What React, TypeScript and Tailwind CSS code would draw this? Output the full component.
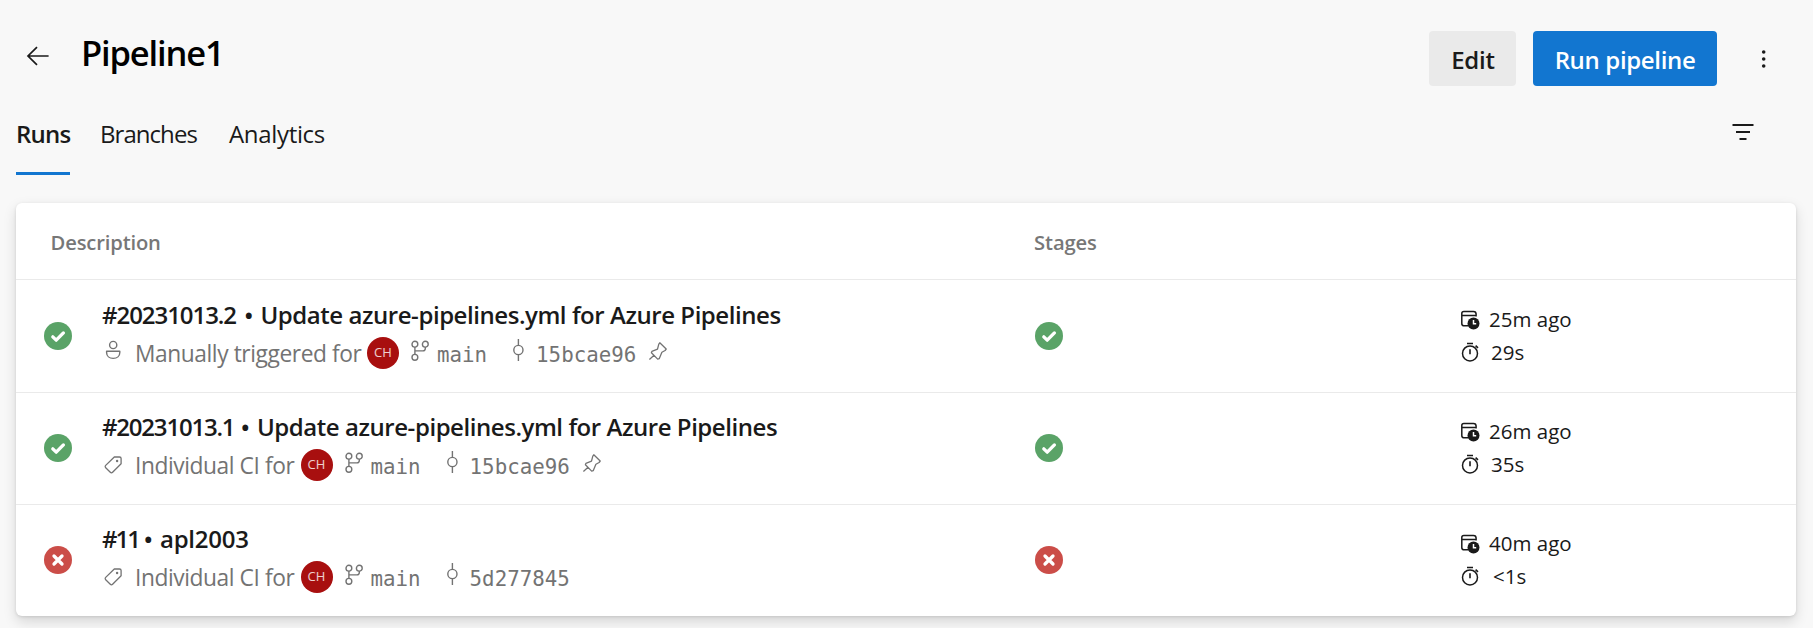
import type { ReactNode } from "react";

type Run = {
  id: string;
  idClass: string;
  title: string;
  titleClass: string;
  trigger: "manual" | "ci";
  commit: string;
  pinned: boolean;
  ok: boolean;
  ago: string;
  duration: string;
  durationClass: string;
};

const runs: Run[] = [
  { id: "#20231013.2", idClass: "w-[135px] tracking-[-1.05px]", title: "Update azure-pipelines.yml for Azure Pipelines", titleClass: "tracking-[-0.45px]", trigger: "manual", commit: "15bcae96", pinned: true, ok: true, ago: "25m ago", duration: "29s", durationClass: "pl-[2px]" },
  { id: "#20231013.1", idClass: "w-[131.5px] tracking-[-1.2px]", title: "Update azure-pipelines.yml for Azure Pipelines", titleClass: "tracking-[-0.45px]", trigger: "ci", commit: "15bcae96", pinned: true, ok: true, ago: "26m ago", duration: "35s", durationClass: "pl-[2px]" },
  { id: "#11", idClass: "w-[34.5px] tracking-[-2px]", title: "apl2003", titleClass: "tracking-[-0.25px]", trigger: "ci", commit: "5d277845", pinned: false, ok: false, ago: "40m ago", duration: "<1s", durationClass: "pl-1" },
];

function Icon({ w, h, className = "", children }: { w: number; h: number; className?: string; children: ReactNode }) {
  return (
    <svg width={w} height={h} viewBox={`0 0 ${w} ${h}`} fill="none" stroke="currentColor" strokeWidth="1.4" className={`shrink-0 ${className}`}>
      {children}
    </svg>
  );
}

const StatusIcon = ({ ok, className }: { ok: boolean; className: string }) => (
  <Icon w={28} h={28} className={className}>
    <circle cx="14" cy="14" r="14" fill={ok ? "#5aa367" : "#cb4d48"} stroke="none" />
    <path d={ok ? "M8.8 14.8l3.4 3.4 7.2-7.3" : "M10 10l8 8M18 10l-8 8"} stroke="#fff" strokeWidth="3.3" strokeLinecap="round" strokeLinejoin="round" />
  </Icon>
);

const PersonIcon = () => (
  <Icon w={20} h={20} className="mb-[7px]">
    <circle cx="10.2" cy="5" r="3.6" />
    <path d="M3.6 11.2h13.2v1.2c0 3.6-2.8 6-6.6 6s-6.6-2.4-6.6-6z" strokeLinejoin="round" />
  </Icon>
);

const TagIcon = () => (
  <Icon w={20} h={20} className="mb-px">
    <path d="M11.3 2h5.2c1 0 1.6.7 1.6 1.6v5.2L9.6 17.3c-.7.7-1.6.7-2.3 0l-4.6-4.6c-.7-.7-.7-1.6 0-2.3z" strokeLinejoin="round" strokeWidth="1.3" />
    <circle cx="14.1" cy="6" r="1.2" fill="currentColor" stroke="none" />
  </Icon>
);

const BranchIcon = () => (
  <Icon w={20} h={22} className="mb-[5px] ml-[11px]">
    <circle cx="4.9" cy="4.2" r="2.9" />
    <circle cx="15.3" cy="4.2" r="2.9" />
    <circle cx="4.9" cy="17.3" r="2.9" />
    <path d="M4.9 7.1v7.3M15.3 7.1v1.4c0 1.6-.9 2.4-2.4 2.4H4.9" />
  </Icon>
);

const CommitIcon = () => (
  <Icon w={12} h={22} className="mb-[6px] ml-[25px]">
    <circle cx="6.4" cy="11" r="4.6" />
    <path d="M6.4 0v6.4M6.4 15.6V22" />
  </Icon>
);

const PinIcon = () => (
  <Icon w={20} h={20} className="mb-[5px] ml-3">
    <path d="M11.8 1.8l6.4 6.2-1.1 1.5-3.2 1.8-2.7 6.4-1.5.4-6.3-6.3.5-1.4 5.6-2.2 1.3-5z M6.3 14.1L1.4 18.6" strokeLinejoin="round" strokeWidth="1.3" />
  </Icon>
);

const CalendarIcon = () => (
  <Icon w={20} h={20}>
    <path d="M8.3 15.8H4.2c-1.5 0-2.4-.9-2.4-2.4V3.6c0-1.3.9-2.1 2.1-2.1h9.6c1.5 0 2.6 1.1 2.6 2.6v2.4M1.8 5.4h14.3" strokeWidth="1.5" />
    <circle cx="13.5" cy="13.5" r="6" fill="currentColor" stroke="none" />
    <path d="M13.5 10v3.7h2.7" stroke="#fff" strokeWidth="1.5" />
  </Icon>
);

const StopwatchIcon = () => (
  <Icon w={20} h={20} className="mb-px">
    <circle cx="10" cy="11.4" r="7.5" strokeWidth="1.5" />
    <path d="M7 1.5h6M10 7.2v5M15.6 3.6l2.4 2.3" strokeWidth="1.6" />
  </Icon>
);

function RunRow({ run, first }: { run: Run; first: boolean }) {
  const manual = run.trigger === "manual";
  return (
    <div className={`flex border-t border-[#eaeaea] ${first ? "h-[113px] pt-px" : "h-[112px]"}`}>
      <StatusIcon ok={run.ok} className="mt-[41px] ml-7" />
      <div className="ml-[29px] w-[934px] pt-[19px]">
        <div className="flex pl-px text-[24px] leading-[30px] font-semibold whitespace-nowrap text-[#1a1a1a]">
          <span className={run.idClass}>{run.id}</span>
          <span className="w-[23.5px] text-center">•</span>
          <span className={run.titleClass}>{run.title}</span>
        </div>
        <div className="mt-[7px] flex h-8 items-center pl-[2px] whitespace-nowrap text-[#737373]">
          {manual ? <PersonIcon /> : <TagIcon />}
          <span className={`ml-3 pt-[2px] text-[22.75px] leading-[30px] tracking-[-0.42px] ${manual ? "w-[232px]" : "w-[165.5px]"}`}>
            {manual ? "Manually triggered for" : "Individual CI for"}
          </span>
          <span className="flex size-8 shrink-0 items-center justify-center rounded-full bg-[#a80f0f] text-[13px] text-white/80">CH</span>
          <BranchIcon />
          <span className="ml-[7px] pt-[3px] font-['DejaVu_Sans_Mono',monospace] text-[20.8px] leading-7">main</span>
          <CommitIcon />
          <span className="ml-3 pt-[3px] font-['DejaVu_Sans_Mono',monospace] text-[20.8px] leading-7">{run.commit}</span>
          {run.pinned && <PinIcon />}
        </div>
      </div>
      <StatusIcon ok={run.ok} className="mt-[41px]" />
      <div className="ml-[397px] pt-[22px] text-[20.5px] leading-[33px] text-[#1a1a1a]">
        <div className="flex items-center gap-[9px]">
          <CalendarIcon />
          <span>{run.ago}</span>
        </div>
        <div className="flex items-center gap-[9px]">
          <StopwatchIcon />
          <span className={run.durationClass}>{run.duration}</span>
        </div>
      </div>
    </div>
  );
}

export default function App() {
  return (
    <div className="flex h-[628px] w-[1813px] flex-col overflow-hidden bg-[#f8f8f8] px-4 pt-[31px] font-['Open_Sans','Noto_Sans',sans-serif] text-[#1a1a1a]">
      <header className="flex h-[55px] items-center">
        <Icon w={24} h={20} className="mb-[5px] ml-[10px]">
          <path d="M22.6 10H2M11 1.2L2 10l9 8.8" strokeWidth="1.7" />
        </Icon>
        <h1 className="ml-[31px] pb-3 text-[34.5px] leading-[40px] font-semibold tracking-[-1.15px] text-black">Pipeline1</h1>
        <button className="ml-auto h-[55px] w-[87px] rounded-[4px] bg-[#eaeaea] pt-[2px] pl-px text-[24px] font-semibold tracking-[-0.2px]">Edit</button>
        <button className="ml-[17px] h-[55px] w-[184px] rounded-[4px] bg-[#1276d0] pt-[2px] text-[24px] font-semibold tracking-[-0.35px] text-white">Run pipeline</button>
        <Icon w={8} h={22} className="mr-[29px] ml-[43px]">
          <g fill="currentColor" stroke="none">
            <circle cx="3.7" cy="4" r="1.8" />
            <circle cx="3.7" cy="11" r="1.8" />
            <circle cx="3.7" cy="18" r="1.8" />
          </g>
        </Icon>
      </header>

      <nav className="flex h-[89px] text-[24px] leading-6">
        <span className="w-[54px] border-b-[3px] border-[#1276d0] pt-9 font-semibold tracking-[-0.75px]">Runs</span>
        <span className="ml-[30px] w-[101px] pt-9 tracking-[-0.95px]">Branches</span>
        <span className="ml-[28px] pt-9 tracking-[-0.33px]">Analytics</span>
        <Icon w={22} h={18} className="mt-[37px] mr-[43px] ml-auto">
          <path d="M.5 2H21.5M4 9H18M7.5 16H14.5" strokeWidth="1.9" />
        </Icon>
      </nav>

      <main className="mt-7 h-[413px] w-[1780px] rounded-[6px] bg-white shadow-[0_5.6px_12.6px_rgba(0,0,0,0.132),0_1px_3.2px_rgba(0,0,0,0.108)]">
        <div className="flex h-[76px] items-center pt-[2px] pl-[34.5px] text-[20.2px] font-semibold text-[#777777]">
          <span className="w-[983.5px] tracking-[-0.15px]">Description</span>
          <span className="tracking-[-0.1px]">Stages</span>
        </div>
        {runs.map((run, i) => (
          <RunRow key={run.id} run={run} first={i === 0} />
        ))}
      </main>
    </div>
  );
}
